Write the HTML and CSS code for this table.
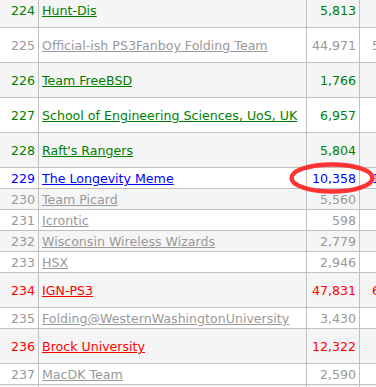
FILE: index.html
```html
<!DOCTYPE html>
<html>
<head>
<meta charset="utf-8">
<link rel="stylesheet" href="styles.css">
</head>
<body>
<div class="board">
<table class="stats">
  <colgroup>
    <col class="c-rank"><col class="c-name"><col class="c-score"><col class="c-more">
  </colgroup>
  <tr class="tall alt green"><td class="rank">224</td><td class="name"><a href="#">Hunt-Dis</a></td><td class="num">5,813</td><td class="more"></td></tr>
  <tr class="tall gray"><td class="rank">225</td><td class="name"><a href="#">Official-ish PS3Fanboy Folding Team</a></td><td class="num">44,971</td><td class="more">5</td></tr>
  <tr class="tall alt green"><td class="rank">226</td><td class="name"><a href="#">Team FreeBSD</a></td><td class="num">1,766</td><td class="more"></td></tr>
  <tr class="tall green"><td class="rank">227</td><td class="name"><a href="#">School of Engineering Sciences, UoS, UK</a></td><td class="num">6,957</td><td class="more"></td></tr>
  <tr class="tall alt green"><td class="rank">228</td><td class="name"><a href="#">Raft's Rangers</a></td><td class="num">5,804</td><td class="more"></td></tr>
  <tr class="blue"><td class="rank">229</td><td class="name"><a href="#">The Longevity Meme</a></td><td class="num">10,358</td><td class="more">1</td></tr>
  <tr class="alt gray"><td class="rank">230</td><td class="name"><a href="#">Team Picard</a></td><td class="num">5,560</td><td class="more"></td></tr>
  <tr class="gray"><td class="rank">231</td><td class="name"><a href="#">Icrontic</a></td><td class="num">598</td><td class="more"></td></tr>
  <tr class="alt gray"><td class="rank">232</td><td class="name"><a href="#">Wisconsin Wireless Wizards</a></td><td class="num">2,779</td><td class="more"></td></tr>
  <tr class="gray"><td class="rank">233</td><td class="name"><a href="#">HSX</a></td><td class="num">2,946</td><td class="more"></td></tr>
  <tr class="tall alt red"><td class="rank">234</td><td class="name"><a href="#">IGN-PS3</a></td><td class="num">47,831</td><td class="more">6</td></tr>
  <tr class="gray"><td class="rank">235</td><td class="name"><a href="#">Folding@WesternWashingtonUniversity</a></td><td class="num">3,430</td><td class="more"></td></tr>
  <tr class="tall alt red"><td class="rank">236</td><td class="name"><a href="#">Brock University</a></td><td class="num">12,322</td><td class="more"></td></tr>
  <tr class="gray"><td class="rank">237</td><td class="name"><a href="#">MacDK Team</a></td><td class="num">2,590</td><td class="more"></td></tr>
  <tr class="alt gray"><td class="rank">238</td><td class="name"><a href="#">Team</a></td><td class="num">1,000</td><td class="more"></td></tr>
</table>
<svg class="ring" width="86" height="32" viewBox="0 0 86 32" aria-hidden="true">
  <ellipse cx="43" cy="16" rx="40.5" ry="13.5" fill="none" stroke="#ff3333" stroke-width="4.5"/>
</svg>
</div>
</body>
</html>
```

FILE: styles.css
```css
html, body {
  margin: 0;
  padding: 0;
  background: #ffffff;
  overflow: hidden;
}

.board {
  position: relative;
  width: 376px;
  height: 387px;
  overflow: hidden;
}

.stats {
  border-collapse: collapse;
  table-layout: fixed;
  width: 480px;
  margin: -8px 0 0 -10px;
  font-family: "DejaVu Sans", Verdana, sans-serif;
  font-size: 12.6px;
  white-space: nowrap;
}

.c-rank { width: 48px; }
.c-name { width: 268px; }
.c-score { width: 53px; }
.c-more { width: 111px; }

.stats td {
  border: 1px solid #c0c0c0;
  padding: 1px 3px 0 3px;
  line-height: 19px;
  background: #ffffff;
}

.stats tr.alt td { background: #f5f5f5; }

.stats tr.tall td {
  padding-top: 8px;
  padding-bottom: 6px;
  line-height: 20px;
}

.rank, .num { text-align: right; }
.name { text-align: left; }
.stats td.more { text-align: left; padding-left: 12px; }

.stats a { text-decoration: underline; color: inherit; }

.green td { color: #008000; }
.gray td { color: #999999; }
.blue td { color: #0000ff; }
.red td { color: #ff0000; }

/* hand-drawn annotation over the table */
.ring {
  position: absolute;
  left: 289px;
  top: 162px;
  z-index: 5;
  pointer-events: none;
}
```
